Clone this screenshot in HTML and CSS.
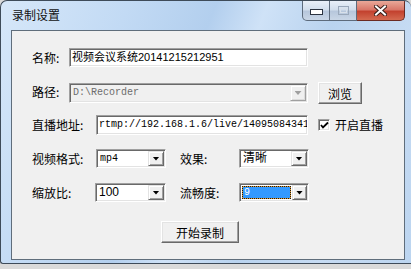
FILE: index.html
```html
<!DOCTYPE html>
<html lang="zh-CN">
<head>
    <meta charset="UTF-8">
    <meta name="viewport" content="width=device-width, initial-scale=1.0">
    <title>录制设置</title>
    <link rel="stylesheet" href="styles.css">
</head>
<body>
    <div class="window">
        <div class="titlebar">
            <span class="title">录制设置</span>
            <div class="caption-buttons">
                <div class="cap-btn cap-min">
                    <svg width="13" height="6" viewBox="0 0 13 6"><rect x="0.5" y="0.5" width="12" height="5" fill="#fff" stroke="#2b3340"/></svg>
                </div>
                <div class="cap-btn cap-max">
                    <svg width="11" height="9" viewBox="0 0 11 9"><rect x="0.5" y="0.5" width="10" height="8" fill="none" stroke="#9aa8ba"/><rect x="2.5" y="2.5" width="6" height="4" fill="none" stroke="#d8e0ea"/></svg>
                </div>
                <div class="cap-btn cap-close">
                    <svg width="13" height="11" viewBox="0 0 13 11">
                        <path d="M2 1.5 L11 9.5 M11 1.5 L2 9.5" stroke="#3a1f1a" stroke-width="4" stroke-linecap="square"/>
                        <path d="M2 1.5 L11 9.5 M11 1.5 L2 9.5" stroke="#fff" stroke-width="2" stroke-linecap="square"/>
                    </svg>
                </div>
            </div>
        </div>

        <div class="client">
            <div class="row row-name">
                <label class="label label-short">名称:</label>
                <div class="field field-name">视频会议系统20141215212951</div>
            </div>

            <div class="row row-path">
                <label class="label label-short">路径:</label>
                <div class="combo combo-path disabled">
                    <span class="combo-text mono">D:\Recorder</span>
                    <span class="drop"></span>
                </div>
                <button class="btn btn-browse">浏览</button>
            </div>

            <div class="row row-url">
                <label class="label label-long">直播地址:</label>
                <div class="field field-url mono">rtmp://192.168.1.6/live/14095084341</div>
                <span class="checkbox">
                    <svg width="9" height="9" viewBox="0 0 9 9"><path d="M1 4 L3 6.5 L8 1.5" fill="none" stroke="#000" stroke-width="1.8"/></svg>
                </span>
                <span class="check-label">开启直播</span>
            </div>

            <div class="row row-pair">
                <label class="label label-long">视频格式:</label>
                <div class="combo combo-small">
                    <span class="combo-text mono">mp4</span>
                    <span class="drop"></span>
                </div>
                <label class="label label-second">效果:</label>
                <div class="combo combo-small">
                    <span class="combo-text">清晰</span>
                    <span class="drop"></span>
                </div>
            </div>

            <div class="row row-pair row-last">
                <label class="label label-long">缩放比:</label>
                <div class="combo combo-small combo-zoom">
                    <span class="combo-text">100</span>
                    <span class="drop"></span>
                </div>
                <label class="label label-second">流畅度:</label>
                <div class="combo combo-small">
                    <span class="combo-text sel mono">9</span>
                    <span class="drop"></span>
                </div>
            </div>

            <div class="row row-start">
                <button class="btn btn-start">开始录制</button>
            </div>
        </div>
    </div>
</body>
</html>
```

FILE: styles.css
```css
body {
    margin: 0;
    background-color: #dadada;
    font-family: "Liberation Sans", "Noto Sans CJK SC", sans-serif;
    font-size: 12px;
    color: #000;
}

.window {
    box-sizing: border-box;
    width: 411px;
    height: 264px;
    border: 1px solid #3e4b59;
    border-right: none;
    border-radius: 7px 7px 0 3px;
    padding: 0 6px 0 10px;
    background: linear-gradient(112deg, #d6e7f9 0%, #c2daf4 25%, #b3cfee 42%, #cfe2f7 52%, #b9d3ef 66%, #c6dbf3 82%, #bcd5f0 100%);
    overflow: hidden;
}

/* 标题栏 */
.titlebar {
    display: flex;
    height: 29px;
}

.title {
    padding: 6px 0 0 1px;
    font-family: "Noto Sans CJK SC", sans-serif;
    font-size: 12px;
    line-height: 16px;
    color: #111;
}

.caption-buttons {
    display: flex;
    margin-left: auto;
    height: 20px;
}

.cap-btn {
    box-sizing: border-box;
    display: flex;
    align-items: center;
    justify-content: center;
    height: 20px;
    border: 1px solid #5d6b7c;
    border-top: none;
}

.cap-min {
    width: 28px;
    border-radius: 0 0 0 5px;
    background: linear-gradient(#e8eff8 0%, #d2deec 45%, #b7c7dc 55%, #c9d6e6 100%);
    padding-top: 2px;
}

.cap-max {
    width: 27px;
    border-left: none;
    background: linear-gradient(#e8eff8 0%, #d2deec 45%, #b7c7dc 55%, #c9d6e6 100%);
}

.cap-close {
    width: 48px;
    border-left: none;
    border-color: #6b2a22;
    border-radius: 0 0 5px 0;
    background: linear-gradient(#e9a899 0%, #d9786a 45%, #c3422f 55%, #d46a50 100%);
}

/* 客户区 */
.client {
    box-sizing: border-box;
    height: 230px;
    padding: 17px 0 0 20px;
    background-color: #f0f0f0;
    border: 1px solid #5f6d7b;
}

.row {
    display: flex;
    align-items: flex-start;
    height: 34px;
}

.row-path {
    height: 33px;
}

.row-last {
    height: 38px;
}

.label {
    font-family: "Noto Sans CJK SC", sans-serif;
    line-height: 19px;
    white-space: nowrap;
}

.label-short {
    width: 37px;
}

.label-long {
    width: 64px;
}

.label-second {
    width: 59px;
    margin-left: 14px;
}

.mono {
    font-family: "Liberation Mono", "Noto Sans CJK SC", monospace;
    font-size: 10px;
}

.field {
    box-sizing: border-box;
    height: 19px;
    padding: 1px 2px;
    background-color: #fff;
    border: 1px solid;
    border-color: #a0a0a0 #fff #fff #a0a0a0;
    box-shadow: inset 1px 1px 0 #696969, inset -1px -1px 0 #e3e3e3;
    line-height: 15px;
    white-space: nowrap;
    overflow: hidden;
}

.field-name {
    width: 239px;
    font-size: 11px;
}

.field-url {
    width: 212px;
    height: 20px;
    line-height: 16px;
}

.combo {
    box-sizing: border-box;
    display: flex;
    height: 19px;
    padding: 1px;
    background-color: #fff;
    border: 1px solid;
    border-color: #a0a0a0 #fff #fff #a0a0a0;
    box-shadow: inset 1px 1px 0 #696969, inset -1px -1px 0 #e3e3e3;
}

.combo-text {
    flex: 1;
    padding-left: 2px;
    line-height: 15px;
    white-space: nowrap;
    overflow: hidden;
}

.drop {
    box-sizing: border-box;
    display: flex;
    align-items: center;
    justify-content: center;
    width: 16px;
    height: 15px;
    background-color: #f0f0f0;
    border: 1px solid;
    border-color: #e3e3e3 #696969 #696969 #e3e3e3;
    box-shadow: inset 1px 1px 0 #fff, inset -1px -1px 0 #a0a0a0;
}

.drop::after {
    content: "";
    width: 7px;
    height: 4px;
    background-color: #000;
    clip-path: polygon(0 0, 100% 0, 50% 100%);
}

.combo-path {
    width: 239px;
    height: 20px;
    margin-top: 1px;
}

.combo-path .combo-text {
    line-height: 16px;
}

.combo-path .drop {
    height: 16px;
}

.disabled {
    background-color: #f0f0f0;
    color: #6d6d6d;
}

.disabled .drop {
    border-color: #f0f0f0 #a0a0a0 #a0a0a0 #f0f0f0;
    box-shadow: inset 1px 1px 0 #fff, inset -1px -1px 0 #dcdcdc;
}

.disabled .drop::after {
    background-color: #a0a0a0;
}

.combo-small {
    width: 70px;
}

.combo-zoom {
    margin-left: -1px;
    width: 71px;
}

.sel {
    flex: 0 0 auto;
    box-sizing: border-box;
    width: 49px;
    height: 13px;
    margin: 1px 1px 0 1px;
    padding-left: 1px;
    line-height: 11px;
    color: #fff;
    border: 1px dotted #1a1a1a;
    background: linear-gradient(#3399ff, #3399ff) padding-box, linear-gradient(#e39a2e, #e39a2e) border-box;
}

.btn {
    box-sizing: border-box;
    padding: 0;
    font-family: "Noto Sans CJK SC", sans-serif;
    font-size: 12px;
    background-color: #f0f0f0;
    border: 1px solid;
    border-color: #fff #696969 #696969 #fff;
    box-shadow: inset -1px -1px 0 #a0a0a0, inset 1px 1px 0 #e3e3e3;
    color: #000;
}

.btn-browse {
    width: 44px;
    height: 22px;
    margin-left: 10px;
}

.row-url .label {
    line-height: 20px;
}

.checkbox {
    box-sizing: border-box;
    display: flex;
    align-items: center;
    justify-content: center;
    width: 12px;
    height: 12px;
    margin: 4px 0 0 10px;
    background-color: #fff;
    border: 1px solid;
    border-color: #a0a0a0 #fff #fff #a0a0a0;
    box-shadow: inset 1px 1px 0 #696969, inset -1px -1px 0 #e3e3e3;
}

.check-label {
    margin-left: 5px;
    font-family: "Noto Sans CJK SC", sans-serif;
    line-height: 20px;
}

.row-start {
    padding-left: 129px;
}

.btn-start {
    width: 78px;
    height: 22px;
}
```
